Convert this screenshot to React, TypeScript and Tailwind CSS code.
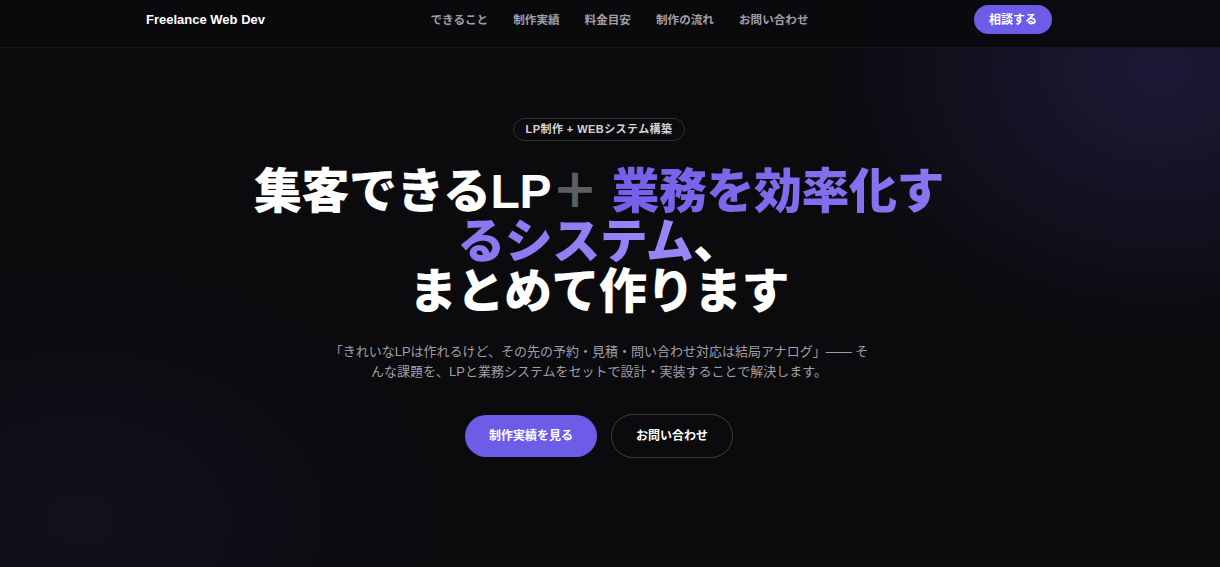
const navItems = ["できること", "制作実績", "料金目安", "制作の流れ", "お問い合わせ"];

export default function App() {
  return (
    <div className="relative min-h-[567px] w-full overflow-hidden bg-[#0b0b0e] font-['Liberation_Sans','Noto_Sans_CJK_JP',sans-serif] text-white">
      {/* background glows */}
      <div className="pointer-events-none absolute inset-0 bg-[radial-gradient(ellipse_480px_380px_at_1160px_70px,rgba(88,72,200,0.22),transparent_70%)]" />
      <div className="pointer-events-none absolute inset-0 bg-[radial-gradient(ellipse_520px_360px_at_80px_520px,rgba(60,70,150,0.10),transparent_70%)]" />

      <header className="relative z-10 border-b border-white/5 bg-[#0b0b0e]/95 pr-[22px]">
        <div className="mx-auto flex w-[906px] items-center justify-between pt-[5px] pb-[13px]">
          <span className="text-[13px] font-bold text-white">Freelance Web Dev</span>
          <nav className="flex items-center gap-[25px] text-[11.6px] font-bold text-zinc-400">
            {navItems.map((item) => (
              <a key={item} href="#" className="hover:text-white">
                {item}
              </a>
            ))}
          </nav>
          <button className="rounded-full bg-[#6c5ce7] px-[15px] py-[6.5px] text-xs font-bold text-white">
            相談する
          </button>
        </div>
      </header>

      <main className="relative z-10 flex flex-col items-center pl-6 pr-[46px] pt-[70px] text-center">
        <span className="rounded-full border border-white/15 px-[12px] py-[2px] text-[11px] font-bold tracking-[0.04em] text-zinc-300">
          LP制作 + WEBシステム構築
        </span>

        <h1 className="mt-[26px] max-w-[720px] text-[48px] font-black leading-[50px] tracking-[-0.01em]">
          集客できるLP<span className="text-white/35">＋</span>{" "}
          <span className="bg-gradient-to-r from-[#7360e8] to-[#9a86f7] bg-clip-text text-transparent">
            業務を効率化するシステム
          </span>
          、<br />
          まとめて作ります
        </h1>

        <p className="mt-[25px] max-w-[540px] text-[13px] leading-5 text-zinc-400">
          「きれいなLPは作れるけど、その先の予約・見積・問い合わせ対応は結局アナログ」—— そんな課題を、LPと業務システムをセットで設計・実装することで解決します。
        </p>

        <div className="mt-[32px] flex items-center gap-[14px]">
          <a href="#" className="rounded-full bg-[#6c5ce7] px-6 py-[13px] text-xs font-bold text-white">
            制作実績を見る
          </a>
          <a href="#" className="rounded-full border border-white/20 px-6 py-[13px] text-xs font-bold text-white">
            お問い合わせ
          </a>
        </div>
      </main>
    </div>
  );
}
